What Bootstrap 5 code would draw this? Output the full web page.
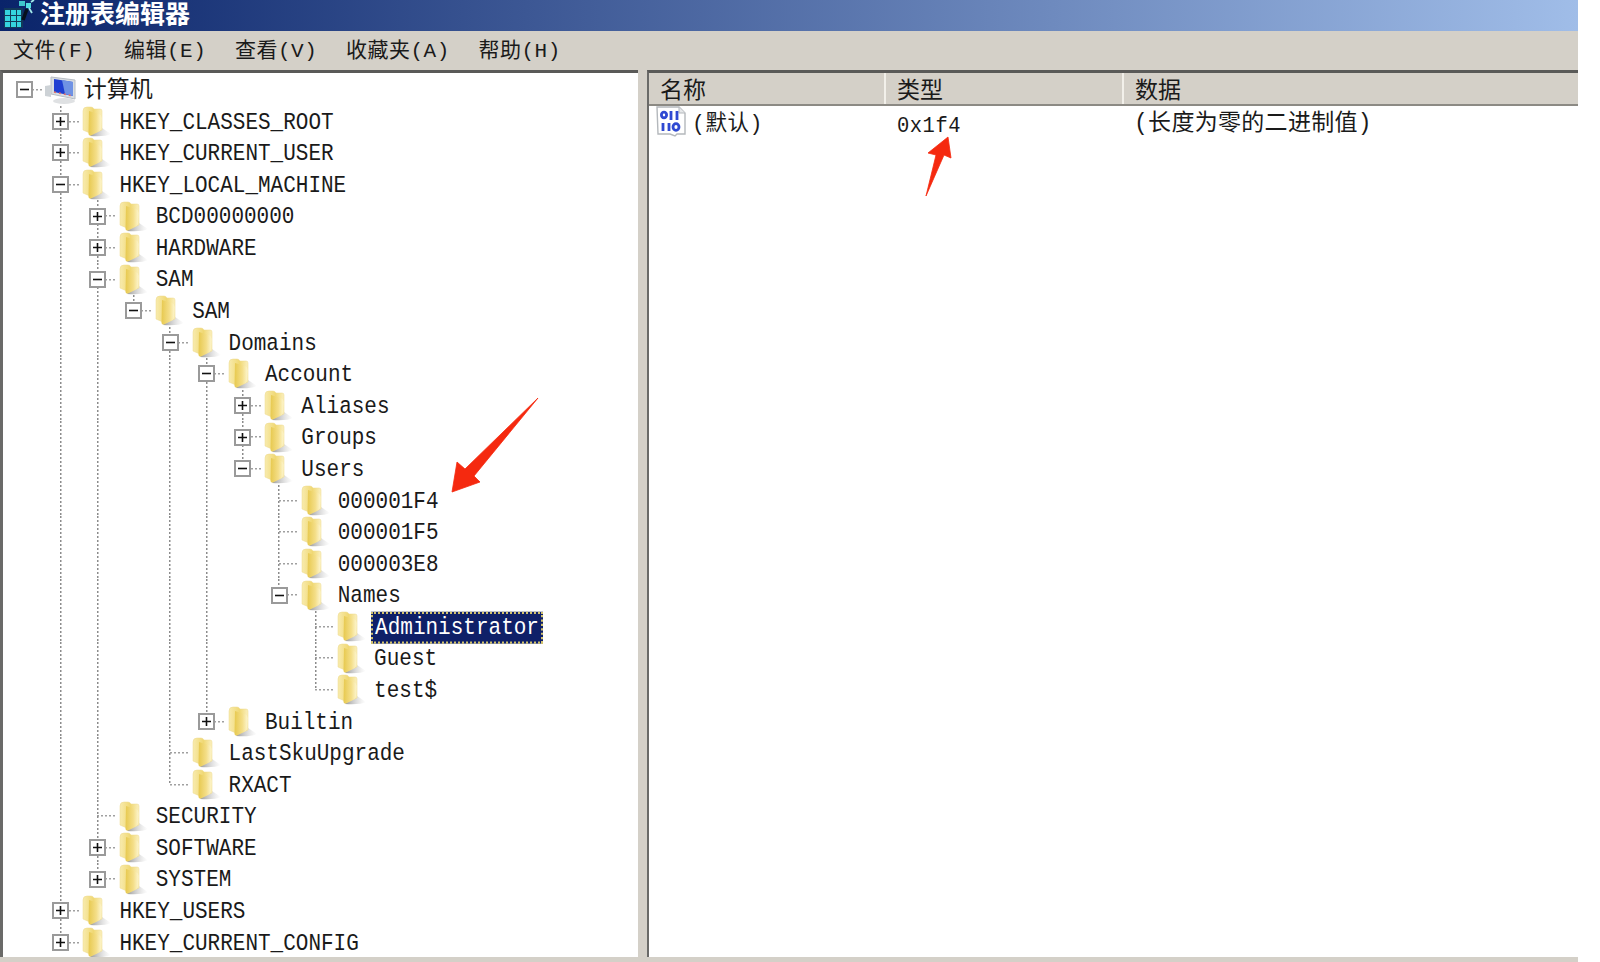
<!DOCTYPE html>
<html lang="zh-CN">
<head>
<meta charset="utf-8">
<title>注册表编辑器</title>
<link href="https://cdn.jsdelivr.net/npm/bootstrap@5.3.0/dist/css/bootstrap.min.css" rel="stylesheet">
<style>
html,body{height:100%;background:#fff;overflow:hidden}
body{font-family:"Liberation Mono","Noto Sans CJK SC",monospace;color:#1a1a1a}
.regedit{width:1578px;height:962px;position:relative}
.titlebar{height:31px;background:linear-gradient(to right,#0a246a 0%,#a0bde8 100%);color:#fff;font:600 25px/25px "Liberation Sans","Noto Sans CJK SC",sans-serif;padding-left:1px;padding-bottom:3px;gap:5px}
.menubar{height:39px;background:#d4d0c8;font-size:21px;letter-spacing:.5px;padding-left:13px;gap:28.7px;line-height:42px}
.panes{height:892px;background:#d4d0c8;padding-bottom:5px}
.leftpane{width:638px;background:#fff;border-top:3px solid #5a5a58;border-left:3px solid #6a6a68;overflow:hidden;padding-left:3.3px;padding-top:1px}
.splitter{width:9px}
.rightpane{flex:1;background:#fff;border-top:3px solid #5a5a58;border-left:2px solid #6a6a68;min-width:0}
.treerow{height:31.59px;font-size:21px;line-height:31.59px;white-space:nowrap}
.treerow>span{display:inline-block;transform:translateY(1.2px) scaleY(1.1)}
.gcell{width:36.4px;height:100%;flex:none;background-repeat:no-repeat}
.vfull,.vtop,.teeh{--dv:repeating-linear-gradient(to bottom,#8c8c8c 0 2px,transparent 2px 4px);--dh:repeating-linear-gradient(to right,#a0a0a0 0 2px,transparent 2px 4px)}
.vfull{background-image:var(--dv);background-size:1.5px 100%;background-position:center}
.vtop{background-image:var(--dv);background-size:1.5px 50%;background-position:center top}
.teeh{background-image:var(--dh);background-size:50% 1.5px;background-position:right center}
.vfull.teeh{background-image:var(--dv),var(--dh);background-size:1.5px 100%,50% 1.5px;background-position:center,right center}
.vtop.teeh{background-image:var(--dv),var(--dh);background-size:1.5px 50%,50% 1.5px;background-position:center top,right center}
.toggle{width:17px;height:17px;background:#fff;display:block}
.foldersvg{width:30px;height:31px;margin-left:3.3px;margin-right:7px;flex:none}
.pcsvg{width:34px;height:30px;margin-left:1px;margin-right:6px;flex:none}
.treerow>.cjklabel{font-size:23px;font-family:"Noto Sans CJK SC",sans-serif;transform:translateY(-2px)}
.treerow>.selected-node{background:#0f2068;color:#fff;height:29px;line-height:26px;padding:0 2px;margin-left:-3px;border:2px dotted #d2c26e}
.listhead{height:33px;background:#d4d0c8;border-bottom:2px solid #8c8a84;font:23px/30px "Noto Sans CJK SC",sans-serif;letter-spacing:0}
.listhead>div{padding-left:11px}
.colname{width:237px;border-right:2px solid #f2f0ea}
.coltype{width:238px;border-right:2px solid #f2f0ea}
.listrow{height:34px;font-size:21.5px;line-height:36px;letter-spacing:.5px}
.cell-name{width:237px;padding-left:6px;font-size:21.5px}
.cell-name svg{width:32px;height:32px;margin-right:5px;flex:none}
.cell-type{width:238px;padding-left:11px;font-size:20.5px;padding-top:3px}
.cell-type span{display:inline-block;transform:scaleY(1.1)}
.cell-data{padding-left:10px;font-size:23px;letter-spacing:.3px}
.arrow-note{position:absolute;left:0;top:0;width:1578px;height:962px;pointer-events:none}
</style>
</head>
<body>
<svg width="0" height="0" class="d-block" aria-hidden="true">
 <defs>
  <linearGradient id="fb" x1="0" y1="0" x2="1" y2="0"><stop offset="0" stop-color="#f8ebae"/><stop offset=".55" stop-color="#f0d873"/><stop offset="1" stop-color="#fbf0c0"/></linearGradient>
  <linearGradient id="ff" x1="0" y1="0" x2="1" y2="0"><stop offset="0" stop-color="#e7c94f"/><stop offset=".6" stop-color="#f4de88"/><stop offset="1" stop-color="#fdf5cc"/></linearGradient>
  <linearGradient id="fs" x1="0" y1="0" x2="1" y2="0"><stop offset="0" stop-color="#777" stop-opacity=".75"/><stop offset="1" stop-color="#bbb" stop-opacity="0"/></linearGradient>
  <symbol id="folder" viewBox="0 0 30 31">
   <path d="M17 20L29 28Q23 31 8 30Z" fill="url(#fs)"/>
   <path d="M1 5Q1 1 5 1L9 1Q11 1 12 3L18 3Q20 3 20 5L20 24L10 28L1 24Z" fill="url(#fb)" stroke="#ecd98c" stroke-width=".5"/>
   <path d="M7 5L17 8Q19.5 9 19.5 12L19 22Q18.5 25 16 26L9 29.5Q7 30 6.5 28Z" fill="url(#ff)"/>
  </symbol>
  <symbol id="plusbox" viewBox="0 0 17 17">
   <rect x="1" y="1" width="15" height="15" fill="#fff" stroke="#9a9a9a" stroke-width="2"/>
   <path d="M4 8.5h9M8.5 4v9" stroke="#111" stroke-width="1.6"/>
  </symbol>
  <symbol id="minusbox" viewBox="0 0 17 17">
   <rect x="1" y="1" width="15" height="15" fill="#fff" stroke="#9a9a9a" stroke-width="2"/>
   <path d="M4 8.5h9" stroke="#111" stroke-width="1.6"/>
  </symbol>
 </defs>
</svg>

<div class="regedit d-flex flex-column">
 <div class="titlebar d-flex align-items-center">
  <svg width="34" height="28" viewBox="0 0 34 28" aria-hidden="true" class="flex-shrink-0">
   <rect x="3" y="8" width="19" height="20" fill="#123a5a"/>
   <g fill="#35d3df"><rect x="4" y="10" width="5" height="5"/><rect x="10" y="10" width="5" height="5"/><rect x="16" y="10" width="4" height="5"/><rect x="4" y="16" width="5" height="5"/><rect x="10" y="16" width="5" height="5"/><rect x="16" y="16" width="4" height="5"/><rect x="4" y="22" width="5" height="5"/><rect x="10" y="22" width="5" height="5"/><rect x="16" y="22" width="4" height="5"/></g>
   <path d="M22 20L26 9" stroke="#06101c" stroke-width="3.5"/>
   <rect x="18" y="1" width="6" height="5" fill="#3fc4cc"/><rect x="25" y="3" width="5" height="5" fill="#52dde0"/><path d="M28 8l3 5M30 2l3-2" stroke="#a3e8ea" stroke-width="1.8"/>
  </svg>
  <span>注册表编辑器</span>
 </div>
 <div class="menubar d-flex"><span>文件(F)</span><span>编辑(E)</span><span>查看(V)</span><span>收藏夹(A)</span><span>帮助(H)</span></div>
 <div class="panes d-flex">
  <div class="leftpane">
   <div class="treerow d-flex align-items-center"><div class="gcell teeh d-flex align-items-center justify-content-center"><svg class="toggle"><use href="#minusbox"/></svg></div>
    <svg class="pcsvg" viewBox="0 0 34 30" aria-hidden="true"><path d="M7 2l24 3v19L7 19z" fill="#d8dde2" stroke="#b9bec4"/><path d="M10 4l19 3v14L10 17z" fill="#1f3fd2"/><path d="M18 5l11 2v14l-8-2z" fill="#6f92e4"/><path d="M10 17l19 4" stroke="#e56f66" stroke-width="1.5" stroke-dasharray="2 3"/><path d="M1 11l6-1v12l-6-1z" fill="#cdd2d6"/><ellipse cx="20" cy="26" rx="11" ry="3" fill="#dfe1e3"/></svg>
    <span class="cjklabel">计算机</span></div>
   <div class="treerow d-flex align-items-center"><div class="gcell"></div><div class="gcell vfull teeh d-flex align-items-center justify-content-center"><svg class="toggle"><use href="#plusbox"/></svg></div><svg class="foldersvg"><use href="#folder"/></svg><span>HKEY_CLASSES_ROOT</span></div>
   <div class="treerow d-flex align-items-center"><div class="gcell"></div><div class="gcell vfull teeh d-flex align-items-center justify-content-center"><svg class="toggle"><use href="#plusbox"/></svg></div><svg class="foldersvg"><use href="#folder"/></svg><span>HKEY_CURRENT_USER</span></div>
   <div class="treerow d-flex align-items-center"><div class="gcell"></div><div class="gcell vfull teeh d-flex align-items-center justify-content-center"><svg class="toggle"><use href="#minusbox"/></svg></div><svg class="foldersvg"><use href="#folder"/></svg><span>HKEY_LOCAL_MACHINE</span></div>
   <div class="treerow d-flex align-items-center"><div class="gcell"></div><div class="gcell vfull"></div><div class="gcell vfull teeh d-flex align-items-center justify-content-center"><svg class="toggle"><use href="#plusbox"/></svg></div><svg class="foldersvg"><use href="#folder"/></svg><span>BCD00000000</span></div>
   <div class="treerow d-flex align-items-center"><div class="gcell"></div><div class="gcell vfull"></div><div class="gcell vfull teeh d-flex align-items-center justify-content-center"><svg class="toggle"><use href="#plusbox"/></svg></div><svg class="foldersvg"><use href="#folder"/></svg><span>HARDWARE</span></div>
   <div class="treerow d-flex align-items-center"><div class="gcell"></div><div class="gcell vfull"></div><div class="gcell vfull teeh d-flex align-items-center justify-content-center"><svg class="toggle"><use href="#minusbox"/></svg></div><svg class="foldersvg"><use href="#folder"/></svg><span>SAM</span></div>
   <div class="treerow d-flex align-items-center"><div class="gcell"></div><div class="gcell vfull"></div><div class="gcell vfull"></div><div class="gcell vtop teeh d-flex align-items-center justify-content-center"><svg class="toggle"><use href="#minusbox"/></svg></div><svg class="foldersvg"><use href="#folder"/></svg><span>SAM</span></div>
   <div class="treerow d-flex align-items-center"><div class="gcell"></div><div class="gcell vfull"></div><div class="gcell vfull"></div><div class="gcell"></div><div class="gcell vfull teeh d-flex align-items-center justify-content-center"><svg class="toggle"><use href="#minusbox"/></svg></div><svg class="foldersvg"><use href="#folder"/></svg><span>Domains</span></div>
   <div class="treerow d-flex align-items-center"><div class="gcell"></div><div class="gcell vfull"></div><div class="gcell vfull"></div><div class="gcell"></div><div class="gcell vfull"></div><div class="gcell vfull teeh d-flex align-items-center justify-content-center"><svg class="toggle"><use href="#minusbox"/></svg></div><svg class="foldersvg"><use href="#folder"/></svg><span>Account</span></div>
   <div class="treerow d-flex align-items-center"><div class="gcell"></div><div class="gcell vfull"></div><div class="gcell vfull"></div><div class="gcell"></div><div class="gcell vfull"></div><div class="gcell vfull"></div><div class="gcell vfull teeh d-flex align-items-center justify-content-center"><svg class="toggle"><use href="#plusbox"/></svg></div><svg class="foldersvg"><use href="#folder"/></svg><span>Aliases</span></div>
   <div class="treerow d-flex align-items-center"><div class="gcell"></div><div class="gcell vfull"></div><div class="gcell vfull"></div><div class="gcell"></div><div class="gcell vfull"></div><div class="gcell vfull"></div><div class="gcell vfull teeh d-flex align-items-center justify-content-center"><svg class="toggle"><use href="#plusbox"/></svg></div><svg class="foldersvg"><use href="#folder"/></svg><span>Groups</span></div>
   <div class="treerow d-flex align-items-center"><div class="gcell"></div><div class="gcell vfull"></div><div class="gcell vfull"></div><div class="gcell"></div><div class="gcell vfull"></div><div class="gcell vfull"></div><div class="gcell vtop teeh d-flex align-items-center justify-content-center"><svg class="toggle"><use href="#minusbox"/></svg></div><svg class="foldersvg"><use href="#folder"/></svg><span>Users</span></div>
   <div class="treerow d-flex align-items-center"><div class="gcell"></div><div class="gcell vfull"></div><div class="gcell vfull"></div><div class="gcell"></div><div class="gcell vfull"></div><div class="gcell vfull"></div><div class="gcell"></div><div class="gcell vfull teeh"></div><svg class="foldersvg"><use href="#folder"/></svg><span>000001F4</span></div>
   <div class="treerow d-flex align-items-center"><div class="gcell"></div><div class="gcell vfull"></div><div class="gcell vfull"></div><div class="gcell"></div><div class="gcell vfull"></div><div class="gcell vfull"></div><div class="gcell"></div><div class="gcell vfull teeh"></div><svg class="foldersvg"><use href="#folder"/></svg><span>000001F5</span></div>
   <div class="treerow d-flex align-items-center"><div class="gcell"></div><div class="gcell vfull"></div><div class="gcell vfull"></div><div class="gcell"></div><div class="gcell vfull"></div><div class="gcell vfull"></div><div class="gcell"></div><div class="gcell vfull teeh"></div><svg class="foldersvg"><use href="#folder"/></svg><span>000003E8</span></div>
   <div class="treerow d-flex align-items-center"><div class="gcell"></div><div class="gcell vfull"></div><div class="gcell vfull"></div><div class="gcell"></div><div class="gcell vfull"></div><div class="gcell vfull"></div><div class="gcell"></div><div class="gcell vtop teeh d-flex align-items-center justify-content-center"><svg class="toggle"><use href="#minusbox"/></svg></div><svg class="foldersvg"><use href="#folder"/></svg><span>Names</span></div>
   <div class="treerow d-flex align-items-center"><div class="gcell"></div><div class="gcell vfull"></div><div class="gcell vfull"></div><div class="gcell"></div><div class="gcell vfull"></div><div class="gcell vfull"></div><div class="gcell"></div><div class="gcell"></div><div class="gcell vfull teeh"></div><svg class="foldersvg"><use href="#folder"/></svg><span class="selected-node">Administrator</span></div>
   <div class="treerow d-flex align-items-center"><div class="gcell"></div><div class="gcell vfull"></div><div class="gcell vfull"></div><div class="gcell"></div><div class="gcell vfull"></div><div class="gcell vfull"></div><div class="gcell"></div><div class="gcell"></div><div class="gcell vfull teeh"></div><svg class="foldersvg"><use href="#folder"/></svg><span>Guest</span></div>
   <div class="treerow d-flex align-items-center"><div class="gcell"></div><div class="gcell vfull"></div><div class="gcell vfull"></div><div class="gcell"></div><div class="gcell vfull"></div><div class="gcell vfull"></div><div class="gcell"></div><div class="gcell"></div><div class="gcell vtop teeh"></div><svg class="foldersvg"><use href="#folder"/></svg><span>test$</span></div>
   <div class="treerow d-flex align-items-center"><div class="gcell"></div><div class="gcell vfull"></div><div class="gcell vfull"></div><div class="gcell"></div><div class="gcell vfull"></div><div class="gcell vtop teeh d-flex align-items-center justify-content-center"><svg class="toggle"><use href="#plusbox"/></svg></div><svg class="foldersvg"><use href="#folder"/></svg><span>Builtin</span></div>
   <div class="treerow d-flex align-items-center"><div class="gcell"></div><div class="gcell vfull"></div><div class="gcell vfull"></div><div class="gcell"></div><div class="gcell vfull teeh"></div><svg class="foldersvg"><use href="#folder"/></svg><span>LastSkuUpgrade</span></div>
   <div class="treerow d-flex align-items-center"><div class="gcell"></div><div class="gcell vfull"></div><div class="gcell vfull"></div><div class="gcell"></div><div class="gcell vtop teeh"></div><svg class="foldersvg"><use href="#folder"/></svg><span>RXACT</span></div>
   <div class="treerow d-flex align-items-center"><div class="gcell"></div><div class="gcell vfull"></div><div class="gcell vfull teeh"></div><svg class="foldersvg"><use href="#folder"/></svg><span>SECURITY</span></div>
   <div class="treerow d-flex align-items-center"><div class="gcell"></div><div class="gcell vfull"></div><div class="gcell vfull teeh d-flex align-items-center justify-content-center"><svg class="toggle"><use href="#plusbox"/></svg></div><svg class="foldersvg"><use href="#folder"/></svg><span>SOFTWARE</span></div>
   <div class="treerow d-flex align-items-center"><div class="gcell"></div><div class="gcell vfull"></div><div class="gcell vtop teeh d-flex align-items-center justify-content-center"><svg class="toggle"><use href="#plusbox"/></svg></div><svg class="foldersvg"><use href="#folder"/></svg><span>SYSTEM</span></div>
   <div class="treerow d-flex align-items-center"><div class="gcell"></div><div class="gcell vfull teeh d-flex align-items-center justify-content-center"><svg class="toggle"><use href="#plusbox"/></svg></div><svg class="foldersvg"><use href="#folder"/></svg><span>HKEY_USERS</span></div>
   <div class="treerow d-flex align-items-center"><div class="gcell"></div><div class="gcell vtop teeh d-flex align-items-center justify-content-center"><svg class="toggle"><use href="#plusbox"/></svg></div><svg class="foldersvg"><use href="#folder"/></svg><span>HKEY_CURRENT_CONFIG</span></div>
  </div>
  <div class="splitter"></div>
  <div class="rightpane">
   <div class="listhead d-flex"><div class="colname">名称</div><div class="coltype">类型</div><div>数据</div></div>
   <div class="listrow d-flex">
    <div class="cell-name d-flex align-items-start">
     <svg viewBox="0 0 32 32" aria-hidden="true"><path d="M2 1h22l6 6v21h-8l-2 2-5-2H3z" fill="#fff" stroke="#b4b8bc" stroke-width="1.4"/><path d="M24 1v6h6" fill="#e6e8ea" stroke="#b4b8bc"/><g fill="none" stroke="#2f49d2" stroke-width="2.8"><ellipse cx="9" cy="9" rx="2.6" ry="2.8"/><path d="M16 5v9M22 5v9M8 17v8M14 17v8"/><ellipse cx="21" cy="21" rx="3" ry="3.4"/></g></svg>
     <span>(默认)</span>
    </div>
    <div class="cell-type"><span>0x1f4</span></div>
    <div class="cell-data">(长度为零的二进制值)</div>
   </div>
  </div>
 </div>
 <svg class="arrow-note" viewBox="0 0 1578 962" aria-hidden="true">
  <path d="M538 398L474 476l6 6-28 10 5-30 8 7z" fill="#f5290f" stroke="#f5290f" stroke-width=".8" stroke-linejoin="round"/>
  <path d="M926 196L936 155l-8-2 20-16 3 21-7-3z" fill="#f5290f" stroke="#f5290f" stroke-width=".8" stroke-linejoin="round"/>
 </svg>
</div>
<script src="https://cdn.jsdelivr.net/npm/bootstrap@5.3.0/dist/js/bootstrap.bundle.min.js"></script>
</body>
</html>
